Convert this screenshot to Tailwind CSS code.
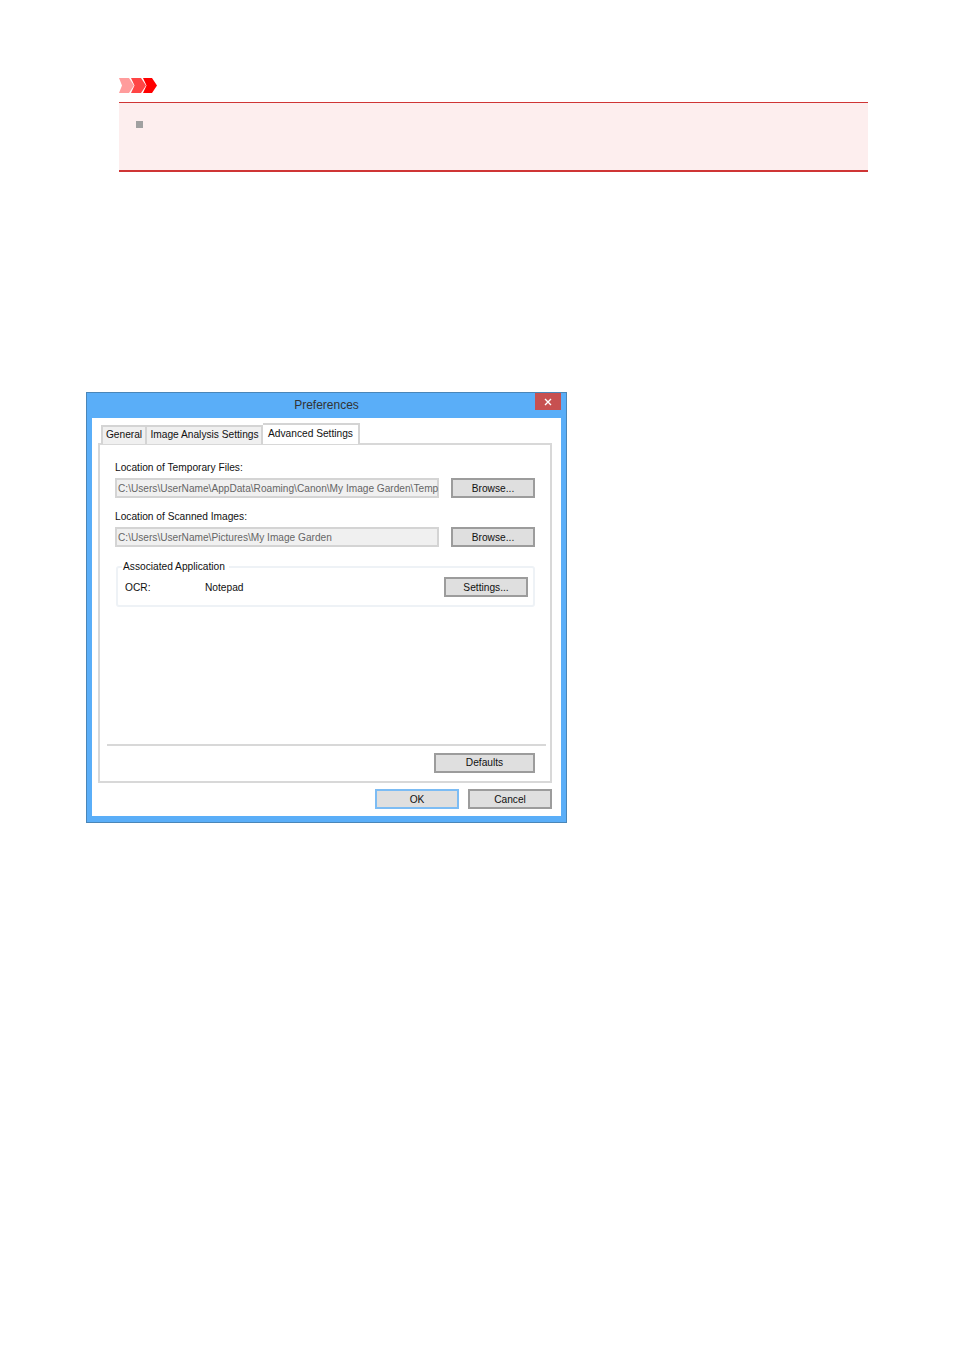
<!DOCTYPE html>
<html lang="en">
<head>
    <meta charset="UTF-8">
    <title>Preferences</title>
    <script src="https://cdn.jsdelivr.net/npm/@tailwindcss/browser@4"></script>
</head>
<body class="bg-white h-[1350px] overflow-hidden font-['Liberation_Sans',Arial,sans-serif]">
    <!-- Important note -->
    <div class="pt-[78px] pl-[119px] pr-[86px]">
        <svg width="38" height="15" viewBox="0 0 38 15" class="block">
            <polygon points="0,0 10,0 15,7.5 10,15 0,15 3,7.5" fill="#ff9c9c"/>
            <polygon points="12,0 22,0 27,7.5 22,15 12,15 15.5,7.5" fill="#ff4545"/>
            <polygon points="24,0 33,0 38,7.5 33,15 24,15 27.5,7.5" fill="#ff0000"/>
        </svg>
        <div class="mt-[9px] h-[70px] bg-[#fdeeee] border-t border-b-2 border-[#cf3535] pt-[18px] pl-[17px]">
            <div class="w-[7px] h-[7px] bg-[#a0a0a0]"></div>
        </div>
    </div>

    <!-- Preferences dialog -->
    <div class="ml-[86px] mt-[220px] w-[481px] h-[431px] bg-[#5aaef8] border border-[#4a86b8] flex flex-col px-[5px] pb-[6px] text-[10.2px] text-[#111]">
        <div class="h-[25px] shrink-0 flex items-start relative">
            <div class="w-full text-center text-[12px] text-[#333] pt-[5px] leading-[14px]">Preferences</div>
            <div class="absolute top-0 right-0 w-[26px] h-[17px] bg-[#c75050] flex items-center justify-center">
                <svg width="8" height="8" viewBox="0 0 8 8"><path d="M1 1L7 7M7 1L1 7" stroke="#fff" stroke-width="1.4"/></svg>
            </div>
        </div>

        <div class="flex-1 bg-white flex flex-col pl-[6px] pr-[9px] pt-[5px] pb-[7px]">
            <!-- Tabs -->
            <div class="flex pl-[3px] h-[21px] shrink-0 items-end relative z-10 -mb-[1px]">
                <div class="w-[46px] h-[19px] bg-[#f0f0f0] border-2 border-[#d4d4d4] border-b-0 flex items-center justify-center pb-[2px]">General</div>
                <div class="w-[116px] h-[19px] bg-[#f0f0f0] border-2 border-[#d4d4d4] border-l-0 border-b-0 flex items-center justify-center pl-[1px] pb-[2px]">Image Analysis Settings</div>
                <div class="w-[97px] h-[21px] bg-white border-2 border-[#d4d4d4] border-l-0 border-b-0 flex items-center justify-center pb-[1px]">Advanced Settings</div>
            </div>

            <div class="h-[340px] border-2 border-[#d8d8d8] flex flex-col px-[15px] pt-[16px]">
                <div class="h-[14px] leading-[14px]">Location of Temporary Files:</div>
                <div class="flex justify-between mt-[3px] h-[20px]">
                    <div class="w-[324px] h-[20px] bg-[#f0f0f0] border-2 border-[#d4d4d4] text-[#666] text-[10.14px] leading-[17px] pl-[1px] whitespace-nowrap">C:\Users\UserName\AppData\Roaming\Canon\My Image Garden\Temp</div>
                    <div class="w-[84px] h-[20px] bg-[#dfdfdf] border-2 border-[#9c9c9c] flex items-center justify-center pt-[1px]">Browse...</div>
                </div>
                <div class="h-[14px] leading-[14px] mt-[12px]">Location of Scanned Images:</div>
                <div class="flex justify-between mt-[3px] h-[20px]">
                    <div class="w-[324px] h-[20px] bg-[#f0f0f0] border-2 border-[#d4d4d4] text-[#666] text-[10.14px] leading-[17px] pl-[1px]">C:\Users\UserName\Pictures\My Image Garden</div>
                    <div class="w-[84px] h-[20px] bg-[#dfdfdf] border-2 border-[#9c9c9c] flex items-center justify-center pt-[1px]">Browse...</div>
                </div>

                <fieldset class="ml-[1px] mt-[13px] h-[47px] border-2 border-[#eef2f6] rounded-[3px] pl-[7px] pr-[5px] flex items-start">
                    <legend class="-ml-[3px] pl-[1px] pr-[4px] h-[14px] leading-[14px]">Associated Application</legend>
                    <div class="flex w-full items-center h-[20px] mt-[3px]">
                        <div class="w-[80px] pt-[1px]">OCR:</div>
                        <div class="flex-1 pt-[1px]">Notepad</div>
                        <div class="w-[84px] h-[20px] bg-[#dfdfdf] border-2 border-[#9c9c9c] flex items-center justify-center pt-[1px]">Settings...</div>
                    </div>
                </fieldset>

                <div class="mt-auto -ml-[8px] -mr-[11px] h-[2px] bg-[#d8d8d8]"></div>
                <div class="flex justify-end mt-[7px] mb-[8px]">
                    <div class="w-[101px] h-[20px] bg-[#dfdfdf] border-2 border-[#9c9c9c] flex items-center justify-center">Defaults</div>
                </div>
            </div>

            <!-- Dialog buttons -->
            <div class="flex justify-end gap-[9px] mt-[6px] h-[20px]">
                <div class="w-[84px] h-[20px] bg-[#dfdfdf] border-2 border-[#7cbcf4] flex items-center justify-center pt-[1px]">OK</div>
                <div class="w-[84px] h-[20px] bg-[#dfdfdf] border-2 border-[#9c9c9c] flex items-center justify-center pt-[1px]">Cancel</div>
            </div>
        </div>
    </div>
</body>
</html>
